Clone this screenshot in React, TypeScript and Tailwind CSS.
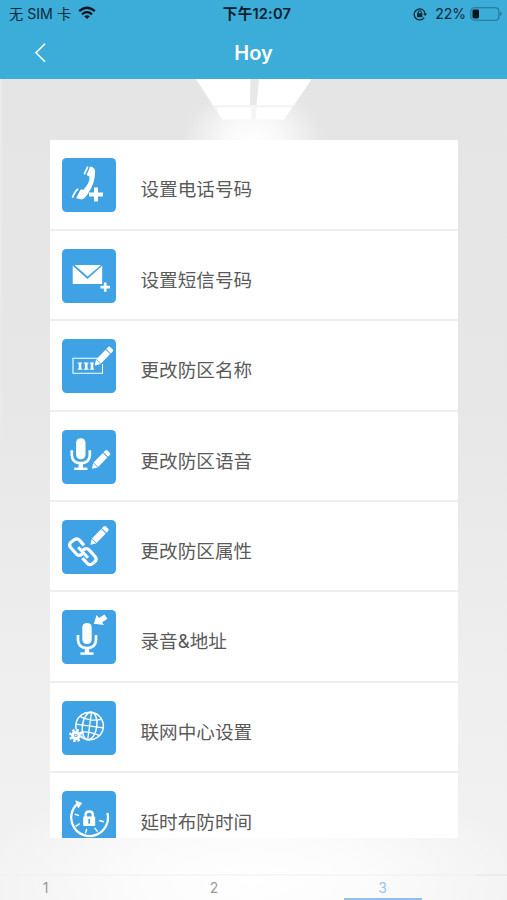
import type { ReactNode } from "react";

const Pencil = ({ x, y }: { x: number; y: number }) => (
  <g transform={`translate(${x} ${y}) rotate(-46)`} fill="#fff">
    <path d="M0 0 L5 -3.2 V3.2 Z" />
    <rect x="5.6" y="-3.2" width="13.2" height="6.4" />
    <path d="M19.8 -3.2 H22.2 Q24 -3.2 24 -1.6 V1.6 Q24 3.2 22.2 3.2 H19.8 Z" />
  </g>
);

const Mic = ({ x, y }: { x: number; y: number }) => (
  <g transform={`translate(${x} ${y})`} fill="none" stroke="#fff">
    <rect x="-4.7" y="0" width="9.4" height="21" rx="4.4" fill="#fff" stroke="none" />
    <path d="M-9 12 V17 Q-8.6 25 0 25 Q8.6 25 9 17 V12" strokeWidth="2.7" />
    <path d="M0 25 V30" strokeWidth="4.4" />
    <path d="M-6.6 30.6 H6.6" strokeWidth="2.4" />
  </g>
);

const PhoneIcon = () => (
  <g fill="#fff">
    <path d="M28.2 8.6 Q32.6 9.4 33 12.6 C33.4 21.5 30.4 29.5 25.4 36.4 Q22.2 41.2 19.4 41.4 L14.2 40.2 L18.6 31.4 L21.4 31.8 C25.6 27.6 27.6 23.4 27.6 18.8 L24.6 17 Z" />
    <path d="M25.8 8.6 L22.2 16.4 M16.2 31.2 Q13.6 31.8 10.4 39.8" fill="none" stroke="#fff" strokeWidth="1.7" />
    <path d="M34 29.4 V43.4 M27 36.4 H41" stroke="#3ea2e4" strokeWidth="5.4" />
    <path d="M34 29.4 V43.4 M27 36.4 H41" stroke="#fff" strokeWidth="4" />
  </g>
);

const MailIcon = () => (
  <g fill="#fff">
    <path d="M12.5 16.1 H39 L25.6 27.4 Z" />
    <path d="M10.7 16.8 L25.5 30 L40.2 16.8 V35 H10.7 Z" />
    <path d="M43.2 33.4 V42.8 M38.5 38.1 H47.9" stroke="#fff" strokeWidth="2.6" />
  </g>
);

const NameIcon = () => (
  <g>
    <path d="M36 19.3 H11 V34.3 H40.5 V25" fill="none" stroke="#fff" strokeWidth="1.1" />
    <path d="M18 24 V30 M24.2 24 V30 M30 24 V30" stroke="#fff" strokeWidth="2.6" />
    <path
      d="M15.6 24 H20 M15.6 30.2 H20.4 M21.8 24 H26.6 M21.8 30.2 H26.6 M28 24 H32 M28 30.2 H32.2"
      stroke="#fff"
      strokeWidth="1.1"
    />
    <Pencil x={32.8} y={26.4} />
  </g>
);

const VoiceIcon = () => (
  <g>
    <Mic x={18.8} y={8.2} />
    <Pencil x={30} y={38.8} />
  </g>
);

const LinkIcon = () => (
  <g>
    <g fill="none" stroke="#fff" strokeWidth="3.2">
      <path d="M22 25.4 L17.5 20.2 Q15.2 17.8 12.5 19.6 L9 22.3 Q6.4 24.6 8.4 27.2 L14.2 33.8 Q16.6 36.4 19.4 34.6 L21.4 33" />
      <path d="M20.5 30.5 L22 29.3 Q24.8 27.6 27.4 30.1 L33.2 36.8 Q35.4 39.8 32.6 42 L30.2 43.8 Q27.4 45.8 25 43.2 L20.4 38" />
      <path d="M16.2 27.2 L26 37.8" strokeWidth="3" />
    </g>
    <Pencil x={28.4} y={24.8} />
  </g>
);

const RecordIcon = () => (
  <g>
    <Mic x={25} y={13} />
    <path d="M31.8 13.8 L34.6 5 L37 8 L42.4 4.4 L45.4 8.8 L40 12.4 L42 15 Z" fill="#fff" />
  </g>
);

const NetworkIcon = () => (
  <g fill="none" stroke="#fff" strokeWidth="1.5">
    <g transform="rotate(8 27.6 25)">
      <circle cx="27.6" cy="25" r="13.8" />
      <ellipse cx="27.6" cy="25" rx="7.2" ry="13.8" />
      <path d="M27.6 11.2 V38.8 M13.8 25 H41.4 M16.6 16.8 Q27.6 20.6 38.6 16.8 M16.6 33.2 Q27.6 29.4 38.6 33.2" strokeWidth="1.3" />
    </g>
    <circle cx="13.8" cy="34.5" r="6" fill="#3ea2e4" stroke="none" />
    <circle cx="13.8" cy="34.5" r="3.3" strokeWidth="3" />
    <circle cx="13.8" cy="34.5" r="5.6" strokeWidth="2.2" strokeDasharray="2.4 2" />
    <circle cx="13.8" cy="34.5" r="1" fill="#fff" stroke="none" />
  </g>
);

const DelayIcon = () => (
  <g fill="none" stroke="#fff">
    <path d="M16 12.4 A18.4 18.4 0 1 0 45.4 22" strokeWidth="2.3" />
    <path d="M13.2 9.2 L20.2 12 L16.2 17.6 Z" fill="#fff" stroke="none" />
    <rect x="21.2" y="25.6" width="12" height="9.4" rx="1" fill="#fff" stroke="none" />
    <path d="M23.6 26 V23.8 Q23.6 20.5 27.2 20.5 Q30.8 20.5 30.8 23.8 V26" strokeWidth="2.3" />
    <path d="M27.2 28 V32.6" stroke="#3ea2e4" strokeWidth="1.8" />
    <path d="M12.6 23.2 L17 24.7 M13.6 35.4 L17.8 32.6 M37.2 29.5 L42 30.8 M32.6 37 L35.6 40.6 M24.8 38 L23.4 42.3" strokeWidth="1.4" />
  </g>
);

const items: { label: string; icon: ReactNode }[] = [
  { label: "设置电话号码", icon: <PhoneIcon /> },
  { label: "设置短信号码", icon: <MailIcon /> },
  { label: "更改防区名称", icon: <NameIcon /> },
  { label: "更改防区语音", icon: <VoiceIcon /> },
  { label: "更改防区属性", icon: <LinkIcon /> },
  { label: "录音&地址", icon: <RecordIcon /> },
  { label: "联网中心设置", icon: <NetworkIcon /> },
  { label: "延时布防时间", icon: <DelayIcon /> },
];

const tabs = ["1", "2", "3"];

const StatusBar = () => (
  <div className="grid h-[27px] grid-cols-[110px_1fr_110px] items-center pl-[9px] pr-[5px] text-[14px] leading-none text-[#0d2a38]">
    <div className="flex items-center gap-[7px]">
      <span className="whitespace-nowrap pt-px text-[14.2px]">无 SIM 卡</span>
      <svg width="18" height="14" viewBox="0 0 18 14" fill="none" stroke="#06151c" strokeWidth="2.3">
        <path d="M1.2 5.2 Q9 -1.8 16.8 5.2" />
        <path d="M4 8.3 Q9 4 14 8.3" />
        <path d="M9 13 L6.2 10.3 Q9 8.3 11.8 10.3 Z" fill="#06151c" stroke="none" />
      </svg>
    </div>
    <span className="pl-[3px] pt-[2px] text-center text-[14.6px] font-semibold tracking-[0.2px] text-[#08202b]">
      下午12:07
    </span>
    <div className="flex items-center justify-end">
      <svg className="mr-[8px]" width="14" height="14" viewBox="0 0 14 14" fill="none" stroke="#0d2a38">
        <path d="M11.2 10.6 A5.5 5.5 0 1 1 12.2 7" strokeWidth="1.3" />
        <path d="M10.2 6.4 H14 L12.1 9 Z" fill="#0d2a38" stroke="none" />
        <rect x="4" y="6.2" width="5.4" height="4" fill="#0d2a38" stroke="none" />
        <path d="M5.1 6.4 V5.2 Q5.1 3.8 6.7 3.8 Q8.3 3.8 8.3 5.2 V6.4" strokeWidth="1.1" />
      </svg>
      <span className="mr-[4px]">22%</span>
      <svg width="32" height="14" viewBox="0 0 32 14" fill="none">
        <rect x=".8" y=".8" width="28" height="12.4" rx="3.4" stroke="#27718f" strokeWidth="1.1" />
        <rect x="2.5" y="2.5" width="6.5" height="9" rx="1.4" fill="#06151c" />
        <path d="M30.2 4.8 Q31.6 5.4 31.6 7 Q31.6 8.6 30.2 9.2 Z" fill="#27718f" />
      </svg>
    </div>
  </div>
);

// Wall with a skylight above the list and a soft glow on the floor
const Backdrop = () => (
  <svg className="absolute inset-0" width="507" height="821" viewBox="0 79 507 821">
    <defs>
      <linearGradient id="wall" x1="0" y1="0" x2="0" y2="1">
        <stop offset="0" stopColor="#e5e5e5" />
        <stop offset=".4" stopColor="#e7e7e7" />
        <stop offset=".75" stopColor="#efefef" />
        <stop offset="1" stopColor="#f2f2f2" />
      </linearGradient>
      <radialGradient id="lamp">
        <stop offset="0" stopColor="#fff" />
        <stop offset=".4" stopColor="#fff" stopOpacity=".75" />
        <stop offset="1" stopColor="#fff" stopOpacity="0" />
      </radialGradient>
      <radialGradient id="floor">
        <stop offset="0" stopColor="#fff" />
        <stop offset=".4" stopColor="#fff" stopOpacity=".75" />
        <stop offset="1" stopColor="#fff" stopOpacity="0" />
      </radialGradient>
    </defs>
    <rect y="79" width="507" height="821" fill="url(#wall)" />
    <rect y="79" width="2" height="365" fill="#eaeaea" />
    <ellipse cx="253" cy="139" rx="70" ry="50" fill="url(#lamp)" />
    <ellipse cx="253" cy="880" rx="280" ry="110" fill="url(#floor)" />
    <path d="M196 79 H311.5 L284 119.5 H221.5 Z" fill="#f5f5f5" />
    <path
      d="M196 79 H250.5 L250 105 H213.5 Z M216 107.5 H251 L251.5 119.5 H222 Z M259 79 H311.5 L294 105 H256.5 Z M256.5 107.5 H292 L284 119.5 H256 Z"
      fill="#fff"
    />
    <path d="M250.5 79 H259 L256.5 105 H250 Z" fill="#e8e8e8" />
    <path d="M0 875 H507" stroke="#f0f0f0" strokeWidth="1" />
    <path d="M476 875 H507" stroke="#e5e5e5" strokeWidth="1" />
  </svg>
);

export default function App() {
  return (
    <div className="flex h-[900px] w-[507px] flex-col overflow-hidden bg-[#ebebeb] font-[Inter,'Noto_Sans_CJK_SC',sans-serif]">
      <header className="h-[79px] shrink-0 bg-[#3cacd8]">
        <StatusBar />
        <div className="grid h-[52px] grid-cols-[80px_1fr_80px] items-center">
          <button aria-label="Back" className="ml-[33px] w-4">
            <svg width="16" height="22" viewBox="0 0 16 22" fill="none" stroke="#fff" strokeWidth="1.6">
              <path d="M12 1.7 L3 10.7 L12 19.7" />
            </svg>
          </button>
          <h1 className="text-center text-[20px] font-semibold leading-none text-white">Hoy</h1>
        </div>
      </header>

      <main className="relative flex flex-1 flex-col">
        <Backdrop />

        <div className="relative mx-[50px] mt-[61px] h-[698px] w-[408px] overflow-hidden bg-white">
          <ul className="pt-[0.5px]">
            {items.map((item) => (
              <li
                key={item.label}
                className="flex h-[90.4px] items-center border-b-2 border-[#eeeeee] pl-3"
              >
                <svg className="mt-[1.6px] shrink-0" width="54" height="54" viewBox="0 0 54 54">
                  <rect width="54" height="54" rx="4.5" fill="#3ea2e4" />
                  {item.icon}
                </svg>
                <span className="ml-[24.5px] mt-[9.4px] text-[18.6px] leading-6 text-[#5a5a5a]">
                  {item.label}
                </span>
              </li>
            ))}
          </ul>
        </div>

        <nav className="relative mt-auto flex h-[25px] gap-[90.5px] pl-[6.5px]">
          {tabs.map((tab) => (
            <button
              key={tab}
              className={
                tab === "3"
                  ? "w-[78px] border-b-[2.5px] border-[#8fc0ee] pt-[2px] text-[14px] leading-none text-[#9ac5ed]"
                  : "w-[78px] border-b-[2.5px] border-transparent pt-[2px] text-[14px] leading-none text-[#9b9b9b]"
              }
            >
              {tab}
            </button>
          ))}
        </nav>
      </main>
    </div>
  );
}
